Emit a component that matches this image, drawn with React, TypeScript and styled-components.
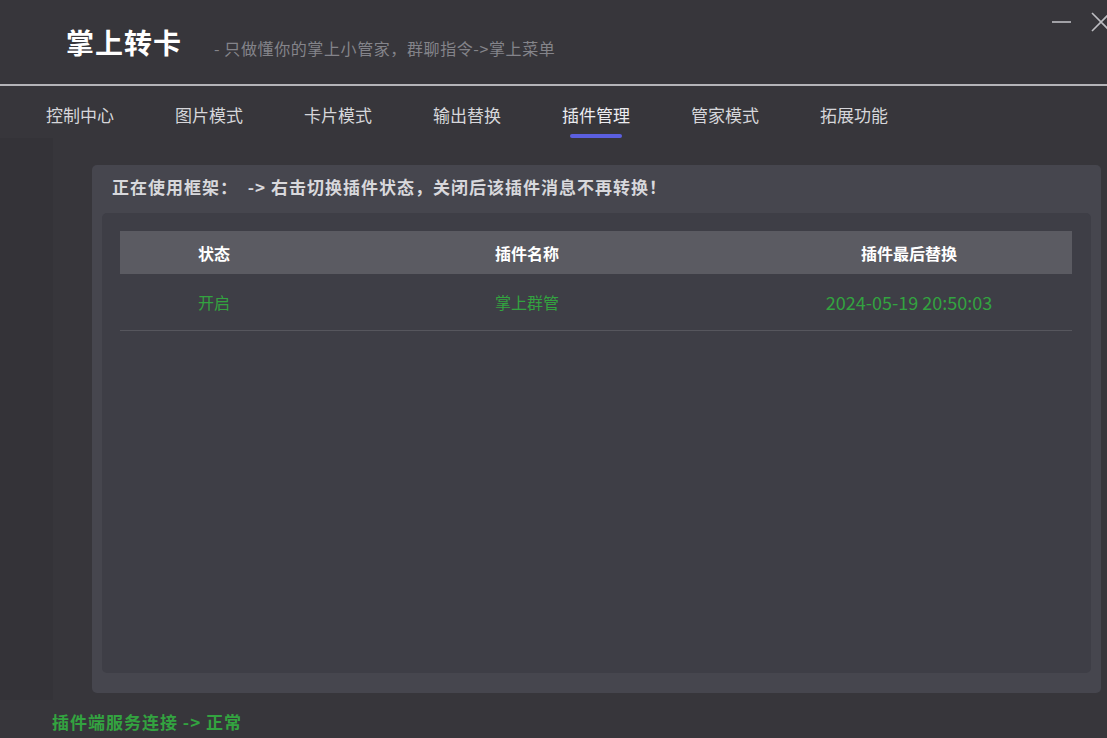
import React from 'react';
import styled, { createGlobalStyle } from 'styled-components';

const GlobalStyle = createGlobalStyle`
  html, body {
    margin: 0;
    padding: 0;
    background: #37363b;
  }
  body {
    font-family: "Noto Sans CJK SC", "Noto Sans", sans-serif;
    color: #dcdce0;
  }
`;

const GREEN = '#33a340';

const Window = styled.div`
  width: 1107px;
  height: 738px;
  display: flex;
  flex-direction: column;
  overflow: hidden;
  background: #37363b;
`;

const TitleBar = styled.div`
  height: 84px;
  display: flex;
  align-items: center;
  padding-left: 66px;
  border-bottom: 2px solid #b4b4b8;
`;

const Title = styled.h1`
  margin: 0;
  font-size: 28px;
  font-weight: 700;
  color: #ffffff;
  letter-spacing: 1px;
`;

const Subtitle = styled.span`
  margin-left: 32px;
  margin-top: 12px;
  font-size: 16px;
  letter-spacing: 0.6px;
  color: #84848a;
`;

const Controls = styled.div`
  margin-left: auto;
  align-self: flex-start;
  display: flex;
  align-items: center;
  gap: 20px;
  margin-top: 12px;
  margin-right: -4px;
`;

const TabBar = styled.nav`
  display: flex;
  padding-left: 45px;
  gap: 59px;
  height: 52px;
`;

const Tab = styled.div<{ $active?: boolean }>`
  display: flex;
  flex-direction: column;
  align-items: center;
  padding-top: 17px;
  font-size: 17px;
  line-height: 24px;
  color: ${p => (p.$active ? '#ececf0' : '#d6d6da')};
  width: 70px;
  white-space: nowrap;

  &::after {
    content: '';
    margin-top: 7px;
    width: 52px;
    height: 4px;
    border-radius: 2px;
    background: ${p => (p.$active ? '#5b5fe0' : 'transparent')};
  }
`;

const ContentRow = styled.div`
  display: flex;
  height: 562px;
`;

const Strip = styled.div`
  width: 53px;
  background: #343338;
`;

const Panel = styled.section`
  margin: 27px 0 0 39px;
  width: 1009px;
  height: 528px;
  box-sizing: border-box;
  background: #46464e;
  border-radius: 5px;
  padding: 10px 10px 20px;
  display: flex;
  flex-direction: column;
`;

const PanelHead = styled.div`
  font-size: 17px;
  font-weight: 700;
  line-height: 24px;
  letter-spacing: 1px;
  color: #d8d8dc;
  padding-left: 10px;
  margin-bottom: 14px;
  white-space: pre;
`;

const Inner = styled.div`
  flex: 1;
  background: #3e3e46;
  border-radius: 5px;
  padding: 18px 19px 18px 18px;
`;

const Table = styled.table`
  width: 100%;
  border-collapse: collapse;
  table-layout: fixed;
`;

const Th = styled.th<{ $w: number }>`
  width: ${p => p.$w}px;
  height: 43px;
  padding: 0;
  background: #5b5b62;
  color: #ffffff;
  font-size: 16px;
  font-weight: 700;
  text-align: center;
`;

const Td = styled.td<{ $size?: number }>`
  height: 56px;
  padding: 0;
  text-align: center;
  color: ${GREEN};
  font-size: ${p => p.$size ?? 16}px;
  border-bottom: 1px solid #56565d;
`;

const Footer = styled.div`
  padding: 10px 0 0 52px;
  font-size: 17px;
  font-weight: 700;
  line-height: 24px;
  letter-spacing: 1px;
  color: ${GREEN};
`;

const MinIcon = () => (
  <svg width="19" height="20" viewBox="0 0 19 20">
    <line x1="0" y1="10" x2="19" y2="10" stroke="#bdbdc2" strokeWidth="1.6" />
  </svg>
);

const CloseIcon = () => (
  <svg width="20" height="20" viewBox="0 0 20 20">
    <path d="M1 1 L19 19 M19 1 L1 19" stroke="#bdbdc2" strokeWidth="1.6" fill="none" />
  </svg>
);

const tabs = ['控制中心', '图片模式', '卡片模式', '输出替换', '插件管理', '管家模式', '拓展功能'];

const rows = [{ status: '开启', name: '掌上群管', time: '2024-05-19 20:50:03' }];

const App = () => {
  return (
    <Window>
      <GlobalStyle />
      <TitleBar>
        <Title>掌上转卡</Title>
        <Subtitle>- 只做懂你的掌上小管家，群聊指令-&gt;掌上菜单</Subtitle>
        <Controls>
          <MinIcon />
          <CloseIcon />
        </Controls>
      </TitleBar>
      <TabBar>
        {tabs.map(t => (
          <Tab key={t} $active={t === '插件管理'}>{t}</Tab>
        ))}
      </TabBar>
      <ContentRow>
        <Strip />
        <Panel>
          <PanelHead>正在使用框架：  -&gt; 右击切换插件状态，关闭后该插件消息不再转换！</PanelHead>
          <Inner>
            <Table>
              <thead>
                <tr>
                  <Th $w={188}>状态</Th>
                  <Th $w={438}>插件名称</Th>
                  <Th $w={326}>插件最后替换</Th>
                </tr>
              </thead>
              <tbody>
                {rows.map(r => (
                  <tr key={r.name}>
                    <Td>{r.status}</Td>
                    <Td>{r.name}</Td>
                    <Td $size={18}>{r.time}</Td>
                  </tr>
                ))}
              </tbody>
            </Table>
          </Inner>
        </Panel>
      </ContentRow>
      <Footer>插件端服务连接 -&gt; 正常</Footer>
    </Window>
  );
};

export default App;
